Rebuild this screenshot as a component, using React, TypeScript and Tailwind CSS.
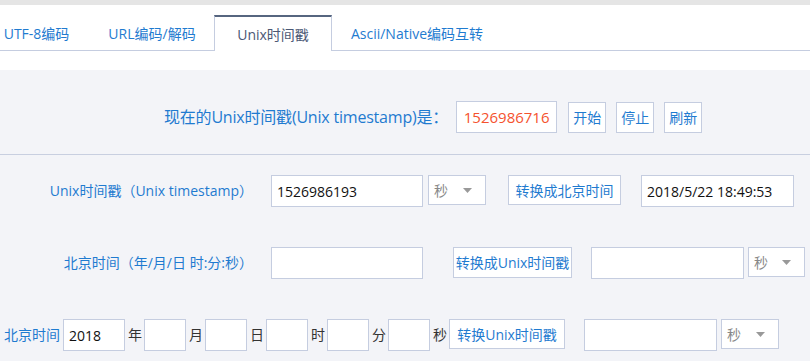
import React from "react";

const font = { fontFamily: '"Open Sans", "Noto Sans CJK SC", sans-serif' };

function Select({ w }: { w: string }) {
    return (
        <div
            className={`${w} h-[30px] bg-white border border-[#c5cde0] flex items-center justify-between pl-[5px] pr-[13px] text-[14px] text-[#888]`}
        >
            <span>秒</span>
            <svg width="9" height="5" viewBox="0 0 9 5">
                <path d="M0 0h9L4.5 5z" fill="#999" />
            </svg>
        </div>
    );
}

function Box({ w, value, h = "h-[32px]" }: { w: string; value?: string; h?: string }) {
    return (
        <div
            className={`${w} ${h} bg-white border border-[#c5cde0] flex items-center px-[5px] text-[14px] text-[#111]`}
        >
            {value}
        </div>
    );
}

function Btn({ w, children, h = "h-[30px]" }: { w: string; children: React.ReactNode; h?: string }) {
    return (
        <div
            className={`${w} ${h} bg-white border border-[#c5cde0] flex items-center justify-center text-[14px] text-[#1f7bd0] whitespace-nowrap`}
        >
            {children}
        </div>
    );
}

function Unit({ children }: { children: React.ReactNode }) {
    return <span className="ml-[3px] mr-[2px] w-[14px] text-[14px] leading-[32px] text-[#333]">{children}</span>;
}

export default function App() {
    const tabs = [
        { label: "UTF-8编码", w: "w-[107px] -ml-[17px]" },
        { label: "URL编码/解码", w: "w-[124px]" },
        { label: "Unix时间戳", w: "w-[118px]", active: true },
        { label: "Ascii/Native编码互转", w: "w-[170px]" },
    ];

    return (
        <div className="w-[810px] h-[361px] overflow-hidden bg-[#f3f4f8]" style={font}>
            <div className="h-[5px] bg-[#e5e5e5]" />
            <div className="bg-white pt-[10px] h-[65px]">
                <div className="flex h-[36px] border-b border-[#c5cde0]">
                    {tabs.map((t) =>
                        t.active ? (
                            <div
                                key={t.label}
                                className={`${t.w} h-[36px] -mb-px bg-white border-t-2 border-x border-t-[#56657f] border-x-[#c5cde0] flex items-center justify-center text-[14px] text-[#4b5875]`}
                            >
                                {t.label}
                            </div>
                        ) : (
                            <div
                                key={t.label}
                                className={`${t.w} shrink-0 h-[35px] pt-[2px] flex items-center justify-center text-[14px] text-[#1f7bd0]`}
                            >
                                {t.label}
                            </div>
                        )
                    )}
                </div>
            </div>

            <div className="flex items-center pl-[164px] pt-[31px] pb-[21px] border-b border-[#c8cfe0]">
                <span className="text-[16px] text-[#1f7bd0] mr-[8px] tracking-[-0.2px]">现在的Unix时间戳(Unix timestamp)是：</span>
                <div className="w-[101px] h-[32px] bg-white border border-[#c5cde0] flex items-center justify-center text-[15px] text-[#f5522e]">
                    1526986716
                </div>
                <div className="ml-[11px] flex gap-[10px]">
                    <Btn w="w-[38px]" h="h-[31px]">开始</Btn>
                    <Btn w="w-[38px]" h="h-[31px]">停止</Btn>
                    <Btn w="w-[38px]" h="h-[31px]">刷新</Btn>
                </div>
            </div>

            <div className="flex items-start mt-[20px]">
                <span className="w-[253px] shrink-0 text-right text-[14px] leading-[31px] text-[#1f7bd0]">
                    Unix时间戳（Unix timestamp）
                </span>
                <div className="ml-[18px]">
                    <Box w="w-[152px]" value="1526986193" />
                </div>
                <div className="ml-[5px]">
                    <Select w="w-[58px]" />
                </div>
                <div className="ml-[22px]">
                    <Btn w="w-[113px]">转换成北京时间</Btn>
                </div>
                <div className="ml-[20px]">
                    <Box w="w-[153px]" value="2018/5/22 18:49:53" />
                </div>
            </div>

            <div className="flex items-start mt-[40px]">
                <span className="w-[253px] shrink-0 text-right text-[14px] leading-[31px] text-[#1f7bd0]">
                    北京时间（年/月/日 时:分:秒）
                </span>
                <div className="ml-[18px]">
                    <Box w="w-[152px]" />
                </div>
                <div className="ml-[30px]">
                    <Btn w="w-[119px]" h="h-[31px]">转换成Unix时间戳</Btn>
                </div>
                <div className="ml-[19px]">
                    <Box w="w-[153px]" />
                </div>
                <div className="ml-[4px]">
                    <Select w="w-[57px]" />
                </div>
            </div>

            <div className="flex items-start mt-[40px] pl-[4px]">
                <span className="text-[14px] leading-[32px] text-[#1f7bd0] mr-[3px]">北京时间</span>
                <Box w="w-[62px]" value="2018" />
                <Unit>年</Unit>
                <Box w="w-[42px]" />
                <Unit>月</Unit>
                <Box w="w-[42px]" />
                <Unit>日</Unit>
                <Box w="w-[42px]" />
                <Unit>时</Unit>
                <Box w="w-[42px]" />
                <Unit>分</Unit>
                <Box w="w-[42px]" />
                <Unit>秒</Unit>
                <Btn w="w-[116px]">转换Unix时间戳</Btn>
                <div className="ml-[19px]">
                    <Box w="w-[133px]" />
                </div>
                <div className="ml-[4px]">
                    <Select w="w-[58px]" />
                </div>
            </div>
        </div>
    );
}
